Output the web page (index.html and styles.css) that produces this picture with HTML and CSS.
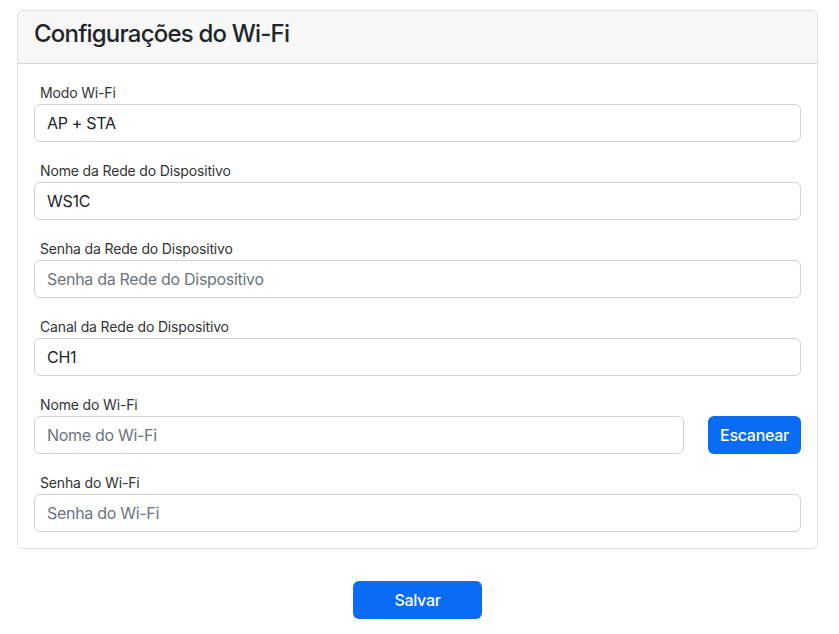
FILE: index.html
```html
<!DOCTYPE html>
<html lang="pt-BR">
<head>
    <meta charset="UTF-8">
    <meta name="viewport" content="width=device-width, initial-scale=1.0">
    <title>Configurações do Wi-Fi</title>
    <link rel="stylesheet" href="styles.css">
</head>
<body>

    <div class="container">
        <div class="card">
            <div class="card-header">
                <h4>Configurações do Wi-Fi</h4>
            </div>
            <div class="card-body">
                <div class="form-group">
                    <label for="modo">Modo Wi-Fi</label>
                    <input id="modo" class="form-control" type="text" value="AP + STA">
                </div>
                <div class="form-group">
                    <label for="apNome">Nome da Rede do Dispositivo</label>
                    <input id="apNome" class="form-control" type="text" value="WS1C">
                </div>
                <div class="form-group">
                    <label for="apSenha">Senha da Rede do Dispositivo</label>
                    <input id="apSenha" class="form-control" type="text" placeholder="Senha da Rede do Dispositivo">
                </div>
                <div class="form-group">
                    <label for="canal">Canal da Rede do Dispositivo</label>
                    <input id="canal" class="form-control" type="text" value="CH1">
                </div>
                <div class="form-group">
                    <label for="ssid">Nome do Wi-Fi</label>
                    <div class="input-row">
                        <input id="ssid" class="form-control" type="text" placeholder="Nome do Wi-Fi">
                        <button class="btn btn-primary btn-scan">Escanear</button>
                    </div>
                </div>
                <div class="form-group">
                    <label for="senha">Senha do Wi-Fi</label>
                    <input id="senha" class="form-control" type="text" placeholder="Senha do Wi-Fi">
                </div>
            </div>
        </div>

        <div class="actions">
            <button class="btn btn-primary btn-save">Salvar</button>
        </div>
    </div>

</body>
</html>
```

FILE: styles.css
```css
* {
    margin: 0;
    padding: 0;
    box-sizing: border-box;
}

body {
    font-family: "Inter", "Noto Sans", sans-serif;
    color: #212529;
    background-color: #fff;
}

.container {
    margin: 10px 21px 0 17px;
}

.card {
    border: 1px solid rgba(0, 0, 0, 0.125);
    border-radius: 6px;
    overflow: hidden;
}

.card-header {
    background-color: #f7f7f7;
    border-bottom: 1px solid rgba(0, 0, 0, 0.125);
    padding: 9px 16px 15px;
}

.card-header h4 {
    font-size: 24px;
    font-weight: 500;
    line-height: 28px;
    letter-spacing: -0.8px;
}

.card-body {
    padding: 18px 16px 16px;
}

.form-group {
    margin-bottom: 18px;
}

.form-group:last-child {
    margin-bottom: 0;
}

.form-group label {
    display: block;
    font-size: 14px;
    line-height: 22px;
    padding-left: 6px;
    color: #333;
    letter-spacing: -0.15px;
}

.form-control {
    display: block;
    width: 100%;
    height: 38px;
    padding: 0 12px;
    font-family: inherit;
    font-size: 16px;
    letter-spacing: -0.3px;
    color: #212529;
    border: 1px solid #ced4da;
    border-radius: 6px;
    background-color: #fff;
    outline: none;
}

.form-control::placeholder {
    color: #6c757d;
}

.input-row {
    display: flex;
    gap: 24px;
}

.input-row .form-control {
    flex: 1;
}

.btn {
    font-family: inherit;
    font-size: 16px;
    font-weight: 500;
    letter-spacing: -0.3px;
    height: 38px;
    border: none;
    border-radius: 6px;
    cursor: pointer;
}

.btn-primary {
    background-color: #0a6cf5;
    color: #fff;
}

.btn-scan {
    width: 93px;
    flex: none;
}

.actions {
    display: flex;
    justify-content: center;
    margin-top: 32px;
}

.btn-save {
    width: 129px;
}
```
